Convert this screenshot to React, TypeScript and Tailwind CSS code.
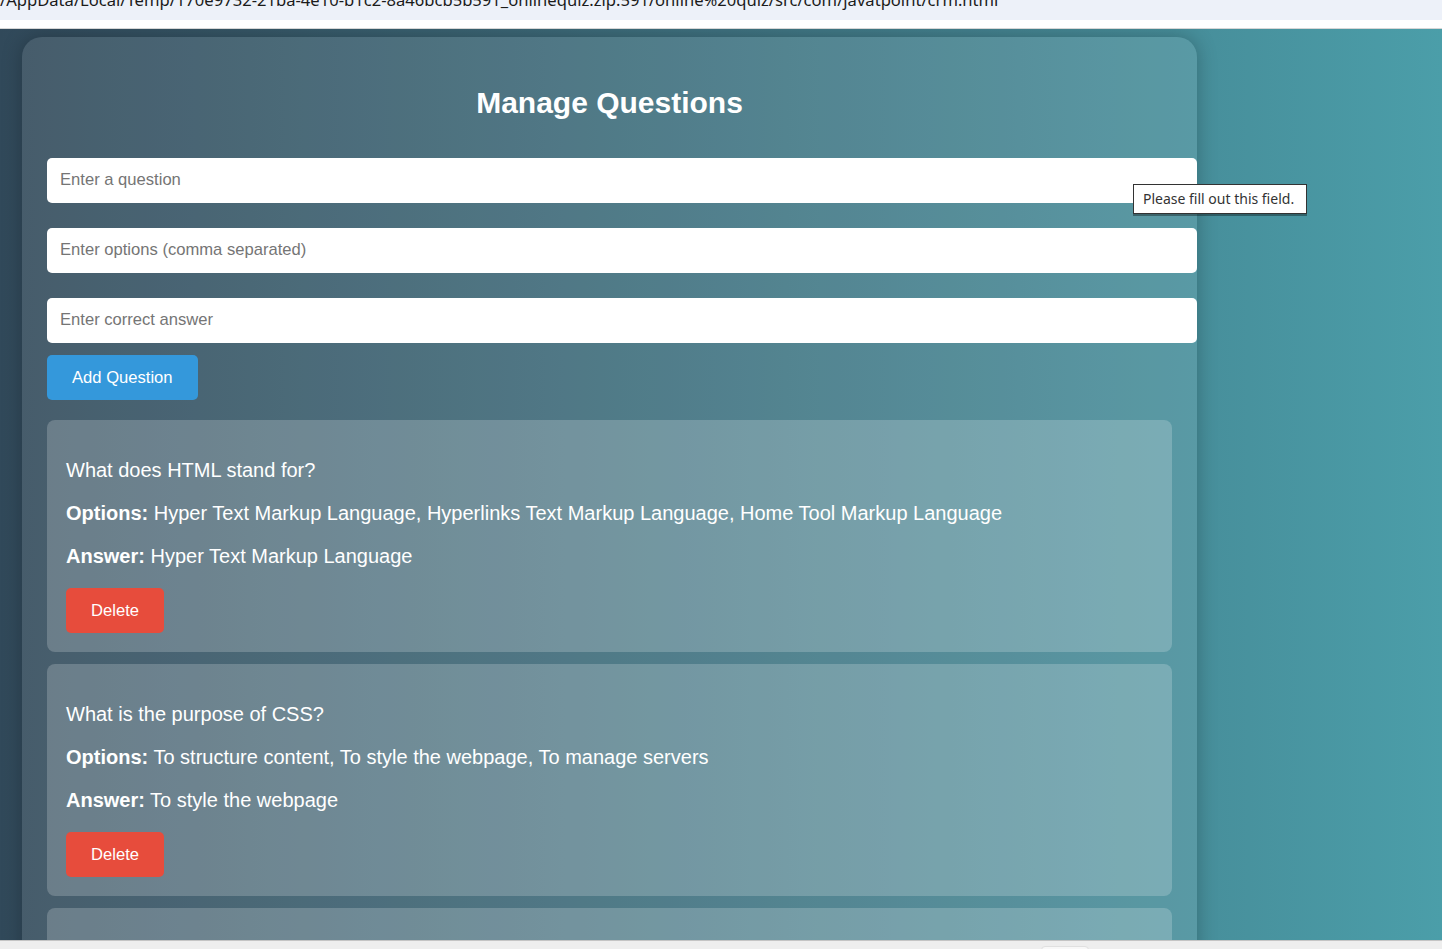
import React from "react";

const questions = [
  {
    q: "What does HTML stand for?",
    options: "Hyper Text Markup Language, Hyperlinks Text Markup Language, Home Tool Markup Language",
    answer: "Hyper Text Markup Language",
  },
  {
    q: "What is the purpose of CSS?",
    options: "To structure content, To style the webpage, To manage servers",
    answer: "To style the webpage",
  },
  {
    q: "Which language is used for web apps?",
    options: "PHP, Python, JavaScript, All",
    answer: "All",
  },
];

export default function App() {
  return (
    <div className="w-[1442px] h-[949px] overflow-hidden flex flex-col relative font-['Liberation_Sans',Arial,sans-serif]">
      <div className="h-[20px] shrink-0 bg-[#edf1f9] overflow-hidden">
        <div className="mt-[-11px] text-[16.6px] leading-[22px] text-[#1b1b1b] whitespace-nowrap font-['Noto_Sans',sans-serif]">
          /AppData/Local/Temp/170e9732-21ba-4e10-b1c2-8a46bcb5b591_onlinequiz.zip.591/online%20quiz/src/com/javatpoint/crm.html
        </div>
      </div>
      <div className="h-[8px] shrink-0 bg-white" />
      <div className="h-[1px] shrink-0 bg-[#d6d6d6]" />
      <div className="flex-1 overflow-hidden bg-gradient-to-r from-[#31495a] to-[#4b9ea9] pl-[22px] pt-[8px]">
        <div className="w-[1175px] rounded-[20px] bg-white/10 shadow-[0_0_20px_rgba(0,0,0,0.25)] pl-[25px] pt-[49px] pb-[40px]">
          <h1 className="text-center text-white font-bold text-[30px] leading-[34px] mr-[25px] mb-[38px]">
            Manage Questions
          </h1>
          <input
            placeholder="Enter a question"
            className="block w-[1150px] h-[45px] rounded-[5px] bg-white px-[13px] pb-[2px] text-[16.6px] text-[#333] placeholder:text-[#757575] outline-none mb-[25px]"
          />
          <input
            placeholder="Enter options (comma separated)"
            className="block w-[1150px] h-[45px] rounded-[5px] bg-white px-[13px] pb-[2px] text-[16.6px] text-[#333] placeholder:text-[#757575] outline-none mb-[25px]"
          />
          <input
            placeholder="Enter correct answer"
            className="block w-[1150px] h-[45px] rounded-[5px] bg-white px-[13px] pb-[2px] text-[16.6px] text-[#333] placeholder:text-[#757575] outline-none mb-[12px]"
          />
          <button className="block h-[45px] px-[25px] pt-[2px] rounded-[5px] bg-[#3498db] text-white text-[16.6px] mb-[20px]">
            Add Question
          </button>
          {questions.map((item, i) => (
            <div key={i} className="w-[1125px] rounded-[8px] bg-white/20 px-[19px] pt-[19px] pb-[19px] mb-[12px] text-white">
              <p className="mt-[20px] text-[20px] leading-[23px]">{item.q}</p>
              <p className="mt-[20px] text-[20px] leading-[23px]">
                <span className="font-bold">Options:</span> {item.options}
              </p>
              <p className="mt-[20px] text-[20px] leading-[23px]">
                <span className="font-bold">Answer:</span> {item.answer}
              </p>
              <button className="mt-[20px] block h-[45px] px-[25px] pt-[2px] rounded-[5px] bg-[#e74c3c] text-white text-[16.6px]">
                Delete
              </button>
            </div>
          ))}
        </div>
      </div>
      <div className="h-[9px] shrink-0 bg-[#eeeeee] border-t border-[#c4c4c4] relative">
        <div className="absolute left-[1041px] top-[5px] w-[48px] h-[6px] bg-[#f8f8f8] border border-[#e0e0e0] rounded-t-[4px]" />
      </div>
      <div className="absolute left-[1133px] top-[184px] w-[174px] h-[30px] bg-white border border-[#333] shadow-[0_2px_0_rgba(0,0,0,0.35)] pl-[9px] pb-[2px] flex items-center text-[14px] text-[#333] font-['Noto_Sans',sans-serif]">
        Please fill out this field.
      </div>
    </div>
  );
}
